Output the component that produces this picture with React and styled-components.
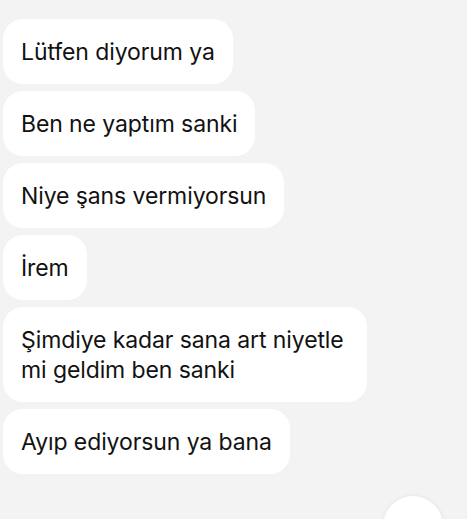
import React from 'react';
import styled, { createGlobalStyle } from 'styled-components';

const GlobalStyle = createGlobalStyle`
  html, body {
    margin: 0;
    padding: 0;
    background: #f3f3f3;
  }
  body {
    font-family: Inter, "Noto Sans", sans-serif;
    overflow: hidden;
  }
`;

const Screen = styled.div`
  position: relative;
  width: 467px;
  height: 519px;
  overflow: hidden;
  background: #f3f3f3;
`;

const Thread = styled.div`
  display: flex;
  flex-direction: column;
  align-items: flex-start;
  gap: 7px;
  padding: 19px 0 0 3px;
`;

const Bubble = styled.div`
  box-sizing: border-box;
  max-width: 364px;
  padding: 17.5px 18px;
  background: #ffffff;
  border-radius: 20px;
  color: #121212;
  font-size: 23px;
  line-height: 30px;
  letter-spacing: -0.1px;
`;

const FloatButton = styled.div`
  position: absolute;
  left: 383px;
  top: 496px;
  width: 60px;
  height: 60px;
  border-radius: 50%;
  background: #ffffff;
  box-shadow: 0 0 4px rgba(0, 0, 0, 0.08);
`;

const messages = [
  'Lütfen diyorum ya',
  'Ben ne yaptım sanki',
  'Niye şans vermiyorsun',
  'İrem',
  'Şimdiye kadar sana art niyetle mi geldim ben sanki',
  'Ayıp ediyorsun ya bana',
];

const App = () => {
  return (
    <Screen>
      <GlobalStyle />
      <Thread>
        {messages.map((m) => (
          <Bubble key={m}>{m}</Bubble>
        ))}
      </Thread>
      <FloatButton />
    </Screen>
  );
};

export default App;
